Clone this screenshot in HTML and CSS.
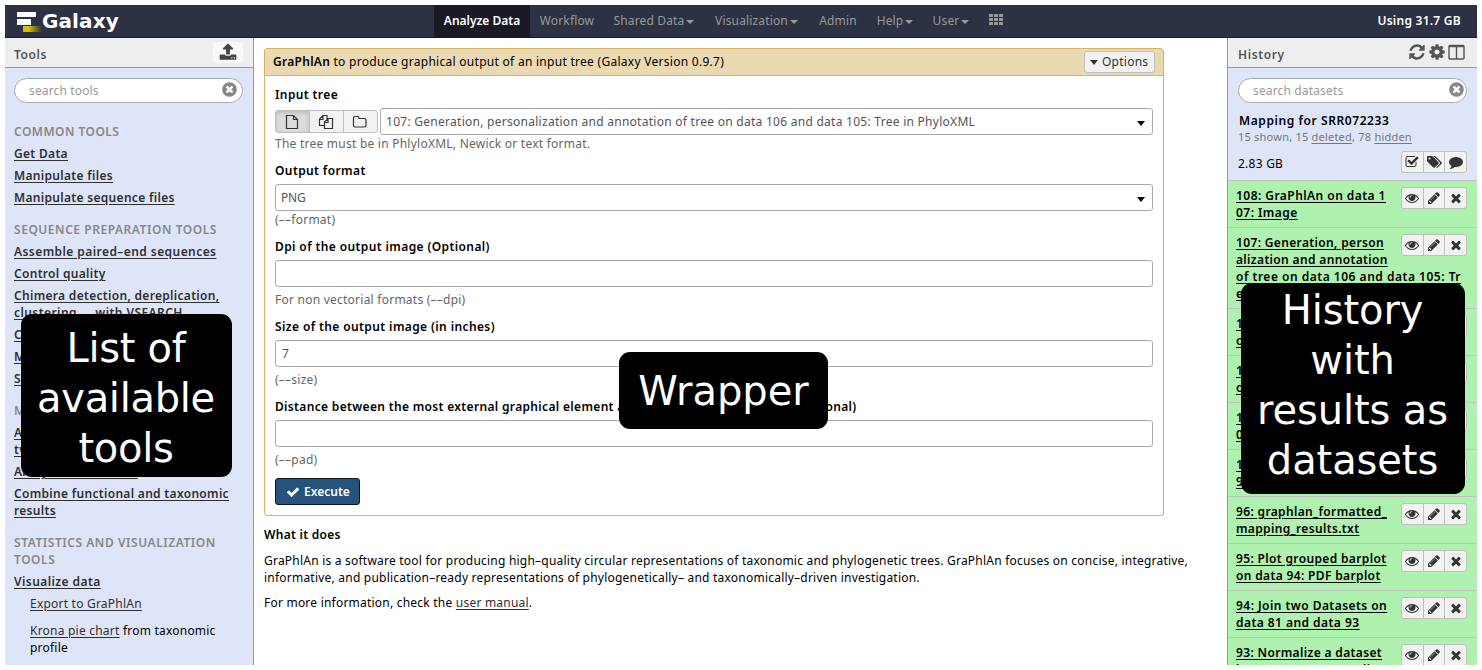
FILE: index.html
```html
<!DOCTYPE html>
<html lang="en">
<head>
<meta charset="utf-8">
<title>Galaxy</title>
<link rel="stylesheet" href="styles.css">
</head>
<body>
<svg class="defs" aria-hidden="true">
  <symbol id="times" viewBox="0 0 1792 1792"><path d="M1490 1322q0 40-28 68l-136 136q-28 28-68 28t-68-28l-294-294-294 294q-28 28-68 28t-68-28l-136-136q-28-28-28-68t28-68l294-294-294-294q-28-28-28-68t28-68l136-136q28-28 68-28t68 28l294 294 294-294q28-28 68-28t68 28l136 136q28 28 28 68t-28 68l-294 294 294 294q28 28 28 68z"/></symbol>
  <symbol id="eye" viewBox="0 0 1792 1792"><path d="M1664 960q-152-236-381-353 61 104 61 225 0 185-131.500 316.500t-316.500 131.500-316.500-131.500-131.500-316.500q0-121 61-225-229 117-381 353 133 205 333.500 326.500t434.500 121.500 434.500-121.500 333.500-326.500zm-720-384q0-20-14-34t-34-14q-125 0-214.500 89.500t-89.500 214.500q0 20 14 34t34 14 34-14 14-34q0-86 61-147t147-61q20 0 34-14t14-34zm848 384q0 34-20 69-140 230-376.500 368.500t-499.500 138.500-499.500-139-376.500-368q-20-35-20-69t20-69q140-229 376.500-368t499.500-139 499.500 139 376.500 368q20 35 20 69z"/></symbol>
  <symbol id="pencil" viewBox="0 0 1792 1792"><path d="M491 1536l91-91-235-235-91 91v107h128v128h107zm523-928q0-22-22-22-10 0-17 7l-542 542q-7 7-7 17 0 22 22 22 10 0 17-7l542-542q7-7 7-17zm-54-192l416 416-832 832h-416v-416zm683 96q0 53-37 90l-166 166-416-416 166-165q36-38 90-38 53 0 91 38l235 234q37 39 37 91z"/></symbol>
  <symbol id="clear" viewBox="0 0 1792 1792"><path d="M1277 1122q0-26-19-45l-181-181 181-181q19-19 19-45 0-27-19-46l-90-90q-19-19-46-19-26 0-45 19l-181 181-181-181q-19-19-45-19-27 0-46 19l-90 90q-19 19-19 46 0 26 19 45l181 181-181 181q-19 19-19 45 0 27 19 46l90 90q19 19 46 19 26 0 45-19l181-181 181 181q19 19 45 19 27 0 46-19l90-90q19-19 19-46zm387-226q0 209-103 385.500t-279.500 279.500-385.500 103-385.500-103-279.500-279.500-103-385.500 103-385.500 279.500-279.500 385.500-103 385.500 103 279.500 279.500 103 385.500z"/></symbol>
</svg>

<div class="app">
  <header class="masthead">
    <div class="brand">
      <svg class="logo" viewBox="0 0 27 22">
        <defs><linearGradient id="fade"><stop offset="0" stop-color="#d6bd00"/><stop offset=".3" stop-color="#d6bd00"/><stop offset="1" stop-color="#d6bd00" stop-opacity="0"/></linearGradient></defs>
        <rect x="2" y="2" width="19" height="5" fill="#fff"/><rect x="2" y="9" width="14" height="6" fill="#fff"/><rect x="8" y="16" width="19" height="6" fill="url(#fade)"/>
      </svg>
      <span class="name">Galaxy</span>
    </div>
    <nav class="nav">
      <a class="on n-analyze">Analyze Data</a>
      <a class="n-work">Workflow</a>
      <a class="n-shared">Shared Data<i class="caret"></i></a>
      <a class="n-vis">Visualization<i class="caret"></i></a>
      <a class="n-admin">Admin</a>
      <a class="n-help">Help<i class="caret"></i></a>
      <a class="n-user">User<i class="caret"></i></a>
      <a class="n-grid"><svg width="14" height="12" viewBox="0 0 14 12"><path d="M0 0h4v3H0zM5 0h4v3H5zM10 0h4v3h-4zM0 4h4v3H0zM5 4h4v3H5zM10 4h4v3h-4zM0 8h4v3H0zM5 8h4v3H5zM10 8h4v3h-4z"/></svg></a>
    </nav>
    <div class="quota">Using 31.7 GB</div>
  </header>

  <div class="columns">
    <aside class="tools">
      <div class="panel-head">
        <span>Tools</span>
        <span class="upload"><svg width="18" height="18" viewBox="0 0 1792 1792"><path d="M1344 1472q0-26-19-45t-45-19-45 19-19 45 19 45 45 19 45-19 19-45zm256 0q0-26-19-45t-45-19-45 19-19 45 19 45 45 19 45-19 19-45zm128-224v320q0 40-28 68t-68 28h-1472q-40 0-68-28t-28-68v-320q0-40 28-68t68-28h427q21 56 70.500 92t110.500 36h256q61 0 110.500-36t70.500-92h427q40 0 68 28t28 68zm-325-648q-17 40-59 40h-256v448q0 26-19 45t-45 19h-256q-26 0-45-19t-19-45v-448h-256q-42 0-59-40-17-39 14-69l448-448q18-19 45-19t45 19l448 448q31 30 14 69z"/></svg></span>
      </div>
      <div class="search"><span>search tools</span><svg><use href="#clear"/></svg></div>
      <div class="tool-list">
        <h4 class="first">COMMON TOOLS</h4>
        <a>Get Data</a>
        <a>Manipulate files</a>
        <a>Manipulate sequence files</a>
        <h4>SEQUENCE PREPARATION TOOLS</h4>
        <a class="loose">Assemble paired–end sequences</a>
        <a>Control quality</a>
        <a>Chimera detection, dereplication,<br><span class="loose">clustering ... with VSEARCH</span></a>
        <a>Clustering</a>
        <a>Mapping</a>
        <a>Sorting</a>
        <h4>METAGENOMICS TOOLS</h4>
        <a>Assign taxonomy<br>two</a>
        <a>Analyze metabolism</a>
        <a>Combine functional and taxonomic<br>results</a>
        <h4>STATISTICS AND VISUALIZATION<br>TOOLS</h4>
        <a class="loose">Visualize data</a>
        <p class="sub"><u>Export to GraPhlAn</u></p>
        <p class="sub second"><u>Krona pie chart</u> from taxonomic<br>profile</p>
      </div>
      <div class="callout c-tools">List of<br>available<br>tools</div>
    </aside>

    <main class="center">
      <section class="form">
        <div class="form-head">
          <span><b>GraPhlAn</b> to produce graphical output of an input tree (Galaxy Version 0.9.7)</span>
          <span class="options"><i class="tri"></i>Options</span>
        </div>
        <div class="form-body">
          <div class="row">
            <label>Input tree</label>
            <div class="pick">
              <div class="modes">
                <span class="active"><svg width="14" height="16" viewBox="0 0 14 16"><path d="M1.500 1.500h7l4 4v9h-11zM8.500 1.500v4h4"/></svg></span>
                <span><svg width="16" height="16" viewBox="0 0 16 16"><path d="M6 11.500H1.500V5l3.500-3.500h4V5M1.500 5.500H5v-4M6.500 14.500V8L10 4.500h4.500v10zM6.500 8.500H10v-4"/></svg></span>
                <span><svg width="16" height="16" viewBox="0 0 16 16"><path d="M1.500 4q0-1.500 1.500-1.500h2.500Q7 2.500 7 4v.5h5.500q1.500 0 1.500 1.500v5.500q0 1.500-1.500 1.500H3q-1.500 0-1.500-1.500z"/></svg></span>
              </div>
              <div class="field select"><span>107: Generation, personalization and annotation of tree on data 106 and data 105: Tree in PhyloXML</span><i class="tri"></i></div>
            </div>
            <p class="help">The tree must be in PhlyloXML, Newick or text format.</p>
          </div>
          <div class="row">
            <label>Output format</label>
            <div class="field select"><span class="snug">PNG</span><i class="tri"></i></div>
            <p class="help">(––format)</p>
          </div>
          <div class="row text">
            <label>Dpi of the output image (Optional)</label>
            <div class="field"></div>
            <p class="help">For non vectorial formats (––dpi)</p>
          </div>
          <div class="row text">
            <label>Size of the output image (in inches)</label>
            <div class="field">7</div>
            <p class="help">(––size)</p>
          </div>
          <div class="row text">
            <label class="long">Distance between the most external graphical element and the border of the image (Optional)</label>
            <div class="field"></div>
            <p class="help">(––pad)</p>
          </div>
          <div class="execute"><svg width="14" height="14" viewBox="0 0 1792 1792"><path d="M1671 566q0 40-28 68l-724 724-136 136q-28 28-68 28t-68-28l-136-136-362-362q-28-28-28-68t28-68l136-136q28-28 68-28t68 28l294 295 656-657q28-28 68-28t68 28l136 136q28 28 28 68z"/></svg>Execute</div>
        </div>
      </section>
      <section class="about">
        <h5>What it does</h5>
        <p>GraPhlAn is a software tool for producing high–quality circular representations of taxonomic and phylogenetic trees. GraPhlAn focuses on concise, integrative,<br>informative, and publication–ready representations of phylogenetically– and taxonomically–driven investigation.</p>
        <p>For more information, check the <u>user manual</u>.</p>
      </section>
      <div class="callout c-wrapper">Wrapper</div>
    </main>

    <aside class="history">
      <div class="panel-head">
        <span>History</span>
        <span class="head-icons">
          <svg width="18" height="18" viewBox="0 0 1792 1792"><path d="M1639 1056q0 5-1 7-64 268-268 434.500t-478 166.500q-146 0-282.500-55t-243.500-157l-129 129q-19 19-45 19t-45-19-19-45v-448q0-26 19-45t45-19h448q26 0 45 19t19 45-19 45l-137 137q71 66 161 102t187 36q134 0 250-65t186-179q11-17 53-117 8-23 30-23h192q13 0 22.500 9.500t9.500 22.500zm25-800v448q0 26-19 45t-45 19h-448q-26 0-45-19t-19-45 19-45l138-138q-148-137-349-137-134 0-250 65t-186 179q-11 17-53 117-8 23-30 23h-199q-13 0-22.500-9.500t-9.500-22.500v-7q65-268 270-434.500t480-166.500q146 0 284 55.500t245 156.500l130-129q19-19 45-19t45 19 19 45z"/></svg>
          <svg width="18" height="18" viewBox="0 0 1792 1792"><path d="M1152 896q0-106-75-181t-181-75-181 75-75 181 75 181 181 75 181-75 75-181zm512-109v222q0 12-8 23t-20 13l-185 28q-19 54-39 91 35 50 107 138 10 12 10 25t-9 23q-27 37-99 108t-94 71q-12 0-26-9l-138-108q-44 23-91 38-16 136-29 186-7 28-36 28h-222q-14 0-24.500-8.500t-11.500-21.500l-28-184q-49-16-90-37l-141 107q-10 9-25 9-14 0-25-11-126-114-165-168-7-10-7-23 0-12 8-23 15-21 51-66.500t54-70.500q-27-50-41-99l-183-27q-13-2-21-12.500t-8-23.500v-222q0-12 8-23t19-13l186-28q14-46 39-92-40-57-107-138-10-12-10-24 0-10 9-23 26-36 98.500-107.500t94.500-71.500q13 0 26 10l138 107q44-23 91-38 16-136 29-186 7-28 36-28h222q14 0 24.500 8.500t11.500 21.500l28 184q49 16 90 37l142-107q9-9 24-9 13 0 25 10 129 119 165 170 7 8 7 22 0 12-8 23-15 21-51 66.500t-54 70.500q26 50 41 98l183 28q13 2 21 12.500t8 23.500z"/></svg>
          <svg class="cols" width="17" height="18" viewBox="0 0 17 18"><path d="M1 3.500q0-1 1-1h13q1 0 1 1V15q0 1-1 1H2q-1 0-1-1zM8.500 3v13M1 3.500h15"/></svg>
        </span>
      </div>
      <div class="search"><span>search datasets</span><svg><use href="#clear"/></svg></div>
      <div class="summary">
        <h3>Mapping for SRR072233</h3>
        <p class="counts">15 shown, 15 <u>deleted</u>, 78 <u>hidden</u></p>
        <div class="size"><span>2.83 GB</span>
          <span class="btns">
            <b><svg viewBox="0 0 1792 1792"><path d="M1472 930v318q0 119-84.500 203.500t-203.500 84.500h-832q-119 0-203.500-84.500t-84.500-203.500v-832q0-119 84.500-203.500t203.500-84.500h832q63 0 117 25 15 7 18 23 3 17-9 29l-49 49q-10 10-23 10-3 0-9-2-23-6-45-6h-832q-66 0-113 47t-47 113v832q0 66 47 113t113 47h832q66 0 113-47t47-113v-254q0-13 9-22l64-64q10-10 23-10 6 0 12 3 20 8 20 29zm231-489l-814 814q-24 24-57 24t-57-24l-430-430q-24-24-24-57t24-57l110-110q24-24 57-24t57 24l263 263 647-647q24-24 57-24t57 24l110 110q24 24 24 57t-24 57z"/></svg></b>
            <b><svg class="tags" viewBox="0 0 1920 1792"><path d="M448 448q0-53-37.500-90.500t-90.500-37.500-90.500 37.500-37.500 90.500 37.500 90.500 90.500 37.500 90.500-37.500 37.500-90.500zm1067 576q0 53-37 90l-491 492q-39 37-91 37-53 0-90-37l-715-716q-38-37-64.500-101t-26.500-117v-416q0-52 38-90t90-38h416q53 0 117 26.500t102 64.500l715 714q37 39 37 91zm384 0q0 53-37 90l-491 492q-39 37-91 37-36 0-59-14t-53-45l470-470q37-37 37-90 0-52-37-91l-715-714q-38-38-102-64.500t-117-26.500h224q53 0 117 26.500t102 64.500l715 714q37 39 37 91z"/></svg></b>
            <b><svg viewBox="0 0 1792 1792"><path d="M1792 896q0 174-120 321.500t-326 233-450 85.500q-70 0-145-8-198 175-460 242-49 14-114 22-17 2-30.500-9t-17.500-29v-1q-3-4-.5-12t2-10 4.500-9.500l6-9 7-8.500 8-9q7-8 31-34.500t34.500-38 31-39.500 32.500-51 27-59 26-76q-157-89-247.500-220t-90.500-281q0-174 120-321.500t326-233 450-85.500 450 85.500 326 233 120 321.500z"/></svg></b>
          </span>
        </div>
      </div>
      <div class="items">
        <div class="item"><a>108: GraPhlAn on data 1<br>07: Image</a><span class="btns"><b><svg><use href="#eye"/></svg></b><b><svg><use href="#pencil"/></svg></b><b><svg><use href="#times"/></svg></b></span></div>
        <div class="item"><a><span class="tight">107: Generation, person<br>alization and annotation</span><br><span class="loose">of tree on data 106 and data 105: Tr</span><br>ee in PhyloXML</a><span class="btns"><b><svg><use href="#eye"/></svg></b><b><svg><use href="#pencil"/></svg></b><b><svg><use href="#times"/></svg></b></span></div>
        <div class="item"><a>106: Generation<br>on data 105</a><span class="btns"><b><svg><use href="#eye"/></svg></b><b><svg><use href="#pencil"/></svg></b><b><svg><use href="#times"/></svg></b></span></div>
        <div class="item"><a>105: Generation<br>on data 100</a><span class="btns"><b><svg><use href="#eye"/></svg></b><b><svg><use href="#pencil"/></svg></b><b><svg><use href="#times"/></svg></b></span></div>
        <div class="item"><a>104: Export data 1<br>00: Tree</a><span class="btns"><b><svg><use href="#eye"/></svg></b><b><svg><use href="#pencil"/></svg></b><b><svg><use href="#times"/></svg></b></span></div>
        <div class="item"><a>100: Export data<br>96: Tree</a><span class="btns"><b><svg><use href="#eye"/></svg></b><b><svg><use href="#pencil"/></svg></b><b><svg><use href="#times"/></svg></b></span></div>
        <div class="item"><a class="tight">96: graphlan_formatted_<br>mapping_results.txt</a><span class="btns"><b><svg><use href="#eye"/></svg></b><b><svg><use href="#pencil"/></svg></b><b><svg><use href="#times"/></svg></b></span></div>
        <div class="item"><a class="tight">95: Plot grouped barplot<br>on data 94: PDF barplot</a><span class="btns"><b><svg><use href="#eye"/></svg></b><b><svg><use href="#pencil"/></svg></b><b><svg><use href="#times"/></svg></b></span></div>
        <div class="item"><a>94: Join two Datasets on<br>data 81 and data 93</a><span class="btns"><b><svg><use href="#eye"/></svg></b><b><svg><use href="#pencil"/></svg></b><b><svg><use href="#times"/></svg></b></span></div>
        <div class="item"><a class="tight">93: Normalize a dataset<br>by row (sum): normali</a><span class="btns"><b><svg><use href="#eye"/></svg></b><b><svg><use href="#pencil"/></svg></b><b><svg><use href="#times"/></svg></b></span></div>
      </div>
      <div class="callout c-history">History<br>with<br>results as<br>datasets</div>
    </aside>
  </div>
</div>
</body>
</html>
```
FILE: styles.css
```css
* { box-sizing: border-box; }
body {
  margin: 0; padding: 5px; width: 1482px; height: 670px; overflow: hidden;
  background: #fff; color: #000;
  font: 12px/17px "Noto Sans", "Open Sans", sans-serif; letter-spacing: .24px;
}
h3, h4, h5, p { margin: 0; font-size: 12px; font-weight: 600; }
p { font-weight: 400; }
b { font-weight: 600; }
u, a { text-underline-offset: 2px; }
svg { display: block; fill: currentColor; }
.defs { display: none; }
.app { display: flex; flex-direction: column; width: 1472px; height: 660px; overflow: hidden; }

/* Masthead */
.masthead { display: flex; flex: none; height: 33px; background: #2c3143; border-bottom: 1px solid #191a26; color: #999; }
.brand { display: flex; width: 429px; padding: 5px 0 0 10px; }
.logo { width: 27px; height: 22px; }
.name { font: 700 20px/22px "DejaVu Sans", sans-serif; letter-spacing: .1px; color: #fff; }
.nav { display: flex; flex: 1; }
.nav a { display: flex; align-items: center; justify-content: center; height: 32px; padding-bottom: 2px; letter-spacing: .15px; }
.nav .on { background: #191a24; color: #fff; font-weight: 600; letter-spacing: 0; }
.n-analyze { width: 96px; }
.n-work { width: 74px; }
.n-shared { width: 100px; }
.n-vis { width: 105px; }
.n-admin { width: 58px; }
.n-help { width: 56px; }
.n-user { width: 56px; }
.n-grid { width: 34px; }
.caret { margin: 3px 0 0 2px; border: 4px solid transparent; border-top-color: currentColor; border-bottom: 0; }
.quota { margin-right: 16px; color: #fff; font-weight: 600; line-height: 31px; letter-spacing: .26px; }

.columns { display: flex; flex: 1; min-height: 0; }
.panel-head { display: flex; justify-content: space-between; height: 30px; padding: 0 10px 0 9px; background: #eee; border-bottom: 1px solid #999; color: #555; font-weight: 600; line-height: 34px; letter-spacing: .6px; }
.search { display: flex; justify-content: space-between; align-items: center; width: 229px; height: 25px; margin: 10px 0 0 9px; padding: 0 4px 1px 14px; border: 1px solid #aaa; border-radius: 13px; background: #fff; color: #999; letter-spacing: .15px; }
.search svg { width: 17px; height: 17px; color: #888; margin-top: -1px; }

/* Tools */
.tools { position: relative; width: 249px; background: #dfe5f9; border-right: 1px solid #999; overflow: hidden; }
.upload { width: 30px; height: 21px; margin-top: 4px; padding: 1px 6px; border-radius: 3px; background: #f8f8f8; color: #444; }
.tool-list { padding: 20px 9px 0; font-weight: 600; letter-spacing: .31px; color: #2c3143; }
.tool-list h4 { margin-top: 15px; color: #888; letter-spacing: .54px; }
.tool-list .first { margin-top: 0; letter-spacing: .46px; }
.tool-list a { display: block; margin-top: 5px; color: #303030; text-decoration: underline; }
.tool-list .loose { letter-spacing: .43px; }
.tool-list .sub { margin: 5px 0 0 16px; letter-spacing: .22px; color: #000; }
.tool-list .second { margin-top: 10px; }
.sub u { color: #303030; }

/* Tool form */
.center { position: relative; flex: 1; padding: 10px 10px 0; }
.form { width: 900px; height: 468px; border: 1px solid #d8b365; border-radius: 3px; }
.form-head { display: flex; justify-content: space-between; height: 27px; padding: 2px 8px 0; background: #ebd9b2; border-bottom: 1px solid #d8b365; line-height: 22px; letter-spacing: .28px; }
.options { display: flex; align-items: center; width: 71px; height: 22px; padding-left: 5px; gap: 4px; border: 1px solid #bfbfbf; border-radius: 3px; background: #f2f2f2; color: #333; letter-spacing: .25px; }
.tri { border: 4.500px solid transparent; border-top: 5px solid currentColor; border-bottom: 0; }
.form-body { padding: 10px; }
.row { margin-bottom: 10px; }
.row label { display: block; margin-bottom: 5px; font-weight: 600; letter-spacing: .39px; }
.row .long { letter-spacing: .335px; }
.row.text .help { margin-top: 4px; }
.field { height: 27px; padding: 0 6px; border: 1px solid #aaa; border-radius: 3px; line-height: 25px; color: #555; }
.select { flex: 1; display: flex; justify-content: space-between; align-items: center; padding: 0 7px 0 5px; letter-spacing: .27px; }
.select .snug { letter-spacing: -.2px; }
.select .tri { color: #000; margin-top: 4px; }
.pick { display: flex; gap: 2px; }
.modes { display: flex; width: 103px; height: 23px; margin-top: 2px; border: 1px solid #bfbfbf; border-radius: 3px; background: #f2f2f2; }
.modes span { display: flex; flex: 1; justify-content: center; align-items: center; border-left: 1px solid #bfbfbf; }
.modes span:first-child { border-left: 0; }
.modes .active { background: #dcdcdc; box-shadow: inset 0 2px 4px rgba(0,0,0,.15); }
.modes svg { fill: none; stroke: #333; stroke-width: 1.200; margin-right: 1px; }
.help { color: #666; }
.execute { display: flex; align-items: center; gap: 4px; width: 85px; height: 27px; padding-left: 10px; border: 1px solid #0c1721; border-radius: 3px; background: #25537b; color: #fff; font-weight: 600; letter-spacing: 0; }
.about { padding-top: 10px; letter-spacing: .22px; }
.about h5 { margin-bottom: 9px; letter-spacing: .28px; }
.about p { margin-bottom: 8px; white-space: nowrap; }
.about u { color: #303030; }

/* History */
.history { position: relative; width: 250px; background: #dfe5f9; border-left: 1px solid #999; overflow: hidden; }
.history .panel-head { padding: 0 12px 0 10px; }
.history .search { margin-left: 10px; padding-right: 1px; }
.head-icons { display: flex; gap: 2px; padding-top: 5px; }
.cols { fill: none; stroke: #555; stroke-width: 1.400; }
.summary { padding: 9px 10px 0 11px; height: 78px; border-bottom: 1px solid #bfbfbf; }
.summary h3 { height: 16px; letter-spacing: .58px; }
.counts { margin-left: -1px; font-size: 11px; letter-spacing: .22px; color: #777; }
.size { display: flex; justify-content: space-between; margin-top: 6px; }
.size > span:first-child { margin: 4px 0 0 -1px; }
.btns { display: flex; width: 66px; height: 22px; border: 1px solid #bfbfbf; border-radius: 3px; background: #f2f2f2; color: #333; }
.btns b { display: flex; flex: 1; align-items: center; justify-content: center; border-left: 1px solid #bfbfbf; }
.btns b:first-child { border-left: 0; }
.btns svg { width: 14px; height: 14px; }
.btns .tags { width: 15px; }
.item { position: relative; padding: 6px 8px; border-bottom: 1px solid #bfbfbf; background: #aff1af; font-weight: 600; letter-spacing: .45px; white-space: nowrap; }
.item a { text-decoration: underline; }
.item .tight { letter-spacing: .35px; }
.item .loose { letter-spacing: .51px; }
.item .btns { position: absolute; top: 6px; right: 10px; }

/* Callouts laid over the page */
.callout { position: absolute; border-radius: 11px; background: #000; color: #fff; font: 40px/50px "DejaVu Sans", sans-serif; letter-spacing: -.3px; text-align: center; white-space: nowrap; }
.c-tools { left: 16px; top: 276px; width: 211px; height: 163px; padding: 9px 1px 0 0; }
.c-wrapper { left: 365px; top: 314px; width: 209px; height: 77px; padding-top: 14px; letter-spacing: 0; }
.c-history { left: 13px; top: 245px; width: 224px; height: 211px; padding: 2px 1px 0 0; letter-spacing: -.1px; }
```
